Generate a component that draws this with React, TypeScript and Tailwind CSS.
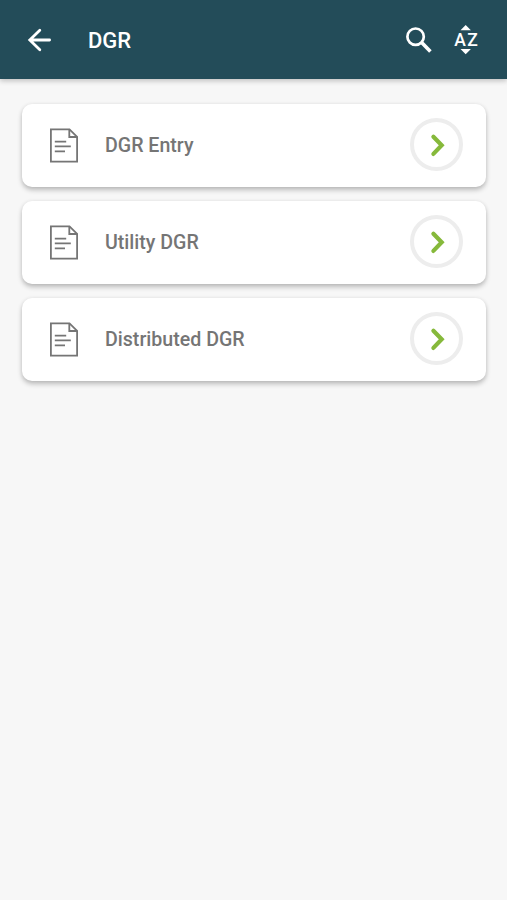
import React from 'react';

const items = [
  { id: 1, title: 'DGR Entry' },
  { id: 2, title: 'Utility DGR' },
  { id: 3, title: 'Distributed DGR' },
];

const BackIcon = () => (
  <svg width="24" height="24" viewBox="0 0 24 24" fill="none" stroke="currentColor" strokeWidth="2.8" strokeLinecap="round">
    <path d="M22.6 12H3M12.8 2.3L2.8 12l10 9.7" />
  </svg>
);

const SearchIcon = () => (
  <svg width="28" height="28" viewBox="0 0 28 28" fill="none" stroke="currentColor">
    <circle cx="10.6" cy="10.7" r="8.2" strokeWidth="2.7" />
    <path d="M16.4 16.3L25.4 25.4" strokeWidth="3.6" />
  </svg>
);

const SortIcon = () => (
  <svg width="26" height="30" viewBox="0 0 26 30" fill="currentColor">
    <path d="M12.7 .1l5.2 5.2H7.5zM12.7 29.3l5.2-5.2H7.5z" />
    <text x="1.3" y="20.8" fontSize="17.5" fontWeight="500" textLength="23.4">AZ</text>
  </svg>
);

const DocIcon = () => (
  <svg width="30" height="36" viewBox="0 0 30 36" fill="none" stroke="currentColor" strokeWidth="1.8">
    <path d="M1.9 1.4h18.6l7.6 7.4v24.8H1.9z" />
    <path d="M20.3 1.4V9h7.8" />
    <path d="M5.8 13.6h11.4M5.8 18.4h16M5.8 23.4h10.2" />
  </svg>
);

const MenuCard = ({ title }: { title: string }) => (
  <button className="flex h-[83px] w-full items-center rounded-[10px] bg-white pr-[23px] pl-[27px] text-left text-[#757575] shadow-[0_3px_5px_rgba(0,0,0,0.24),0_0_4px_rgba(0,0,0,0.06)]">
    <DocIcon />
    <span className="ml-[26px] flex-1 text-[19.6px] font-medium">{title}</span>
    <span className="mb-[2px] flex size-[53px] items-center justify-center rounded-full border-4 border-[#ededed]">
      <svg width="16" height="24" viewBox="0 0 16 24" fill="none" stroke="#86b93b" strokeWidth="4.2" strokeLinecap="round">
        <path d="M4.4 3.7l8.3 8.6-8.3 8.6" />
      </svg>
    </span>
  </button>
);

const App = () => (
  <div className="min-h-screen bg-[#f7f7f7] font-[Roboto,sans-serif]">
    <header className="flex h-[79px] items-center bg-[#234c59] pr-[28px] pl-[27px] text-white shadow-[0_2px_5px_rgba(0,0,0,0.22)]">
      <BackIcon />
      <h1 className="mt-[2px] ml-[37px] flex-1 text-[22px] font-medium">DGR</h1>
      <SearchIcon />
      <span className="ml-[20px]">
        <SortIcon />
      </span>
    </header>
    <main className="flex flex-col gap-[14px] px-[22px] pt-[25px] pr-[21px]">
      {items.map((item) => (
        <MenuCard key={item.id} title={item.title} />
      ))}
    </main>
  </div>
);

export default App;
